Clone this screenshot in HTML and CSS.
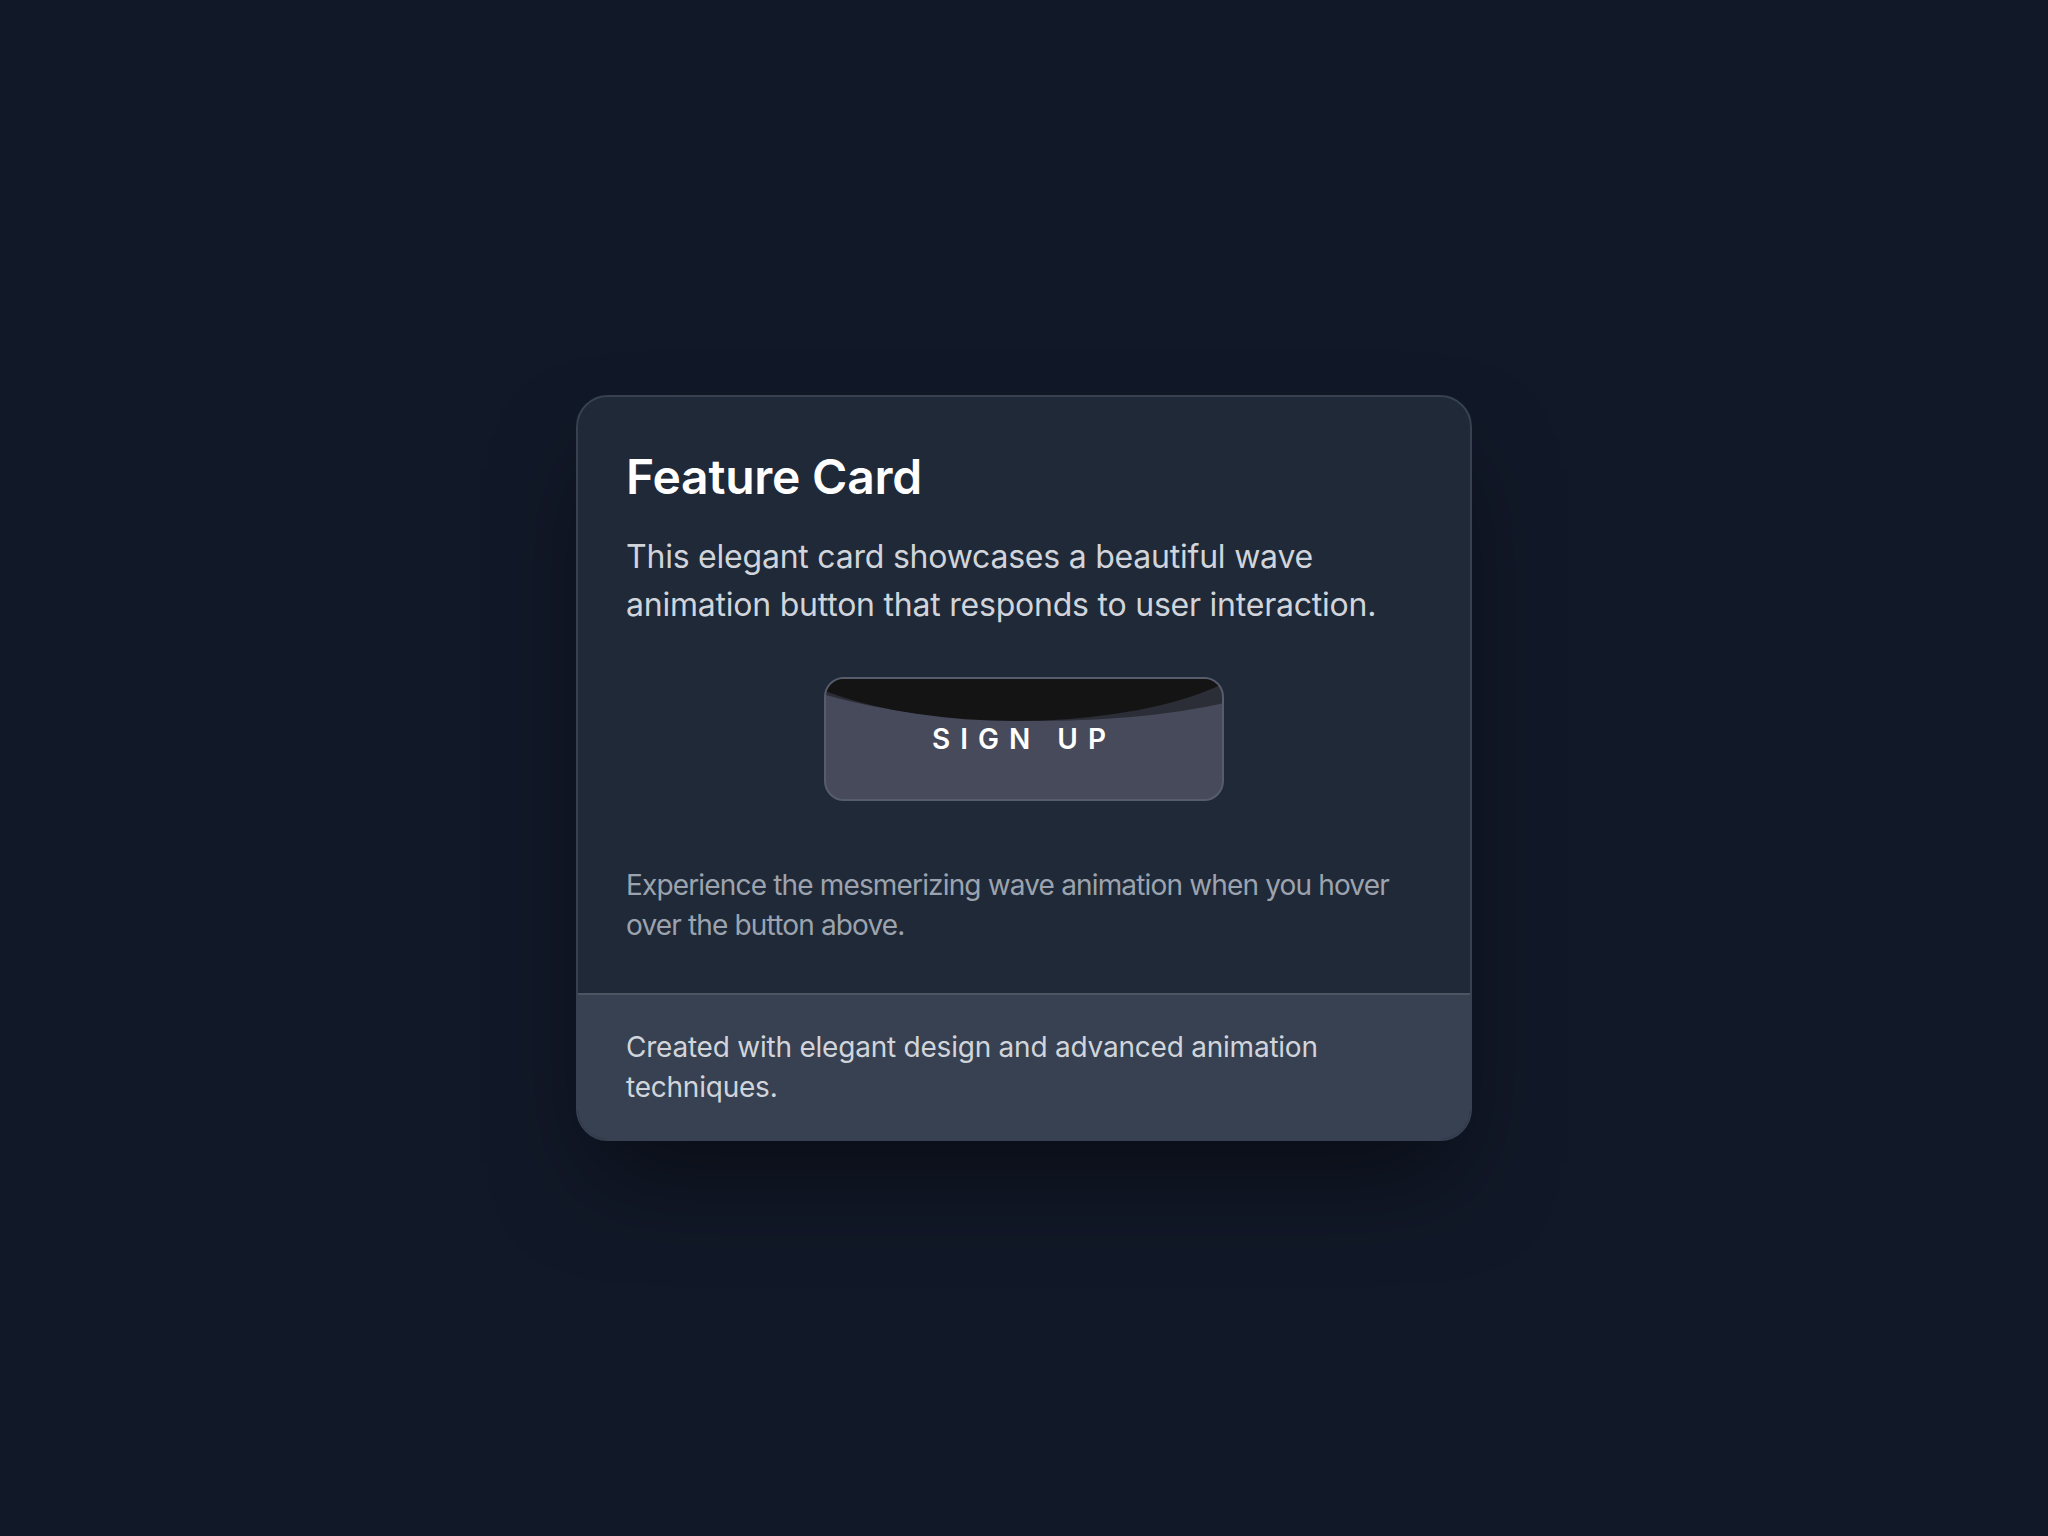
FILE: index.html
```html
<!DOCTYPE html>
<html lang="en">
<head>
    <meta charset="UTF-8">
    <meta name="viewport" content="width=device-width, initial-scale=1.0">
    <title>Feature Card</title>
    <link rel="stylesheet" href="styles.css">
</head>
<body>

<div class="card">
    <div class="card-body">
        <h2 class="card-title">Feature Card</h2>
        <p class="card-text">This elegant card showcases a beautiful wave animation button that responds to user interaction.</p>

        <div class="button-row">
            <button class="wave-button"><span>Sign up</span></button>
        </div>

        <p class="card-note">Experience the mesmerizing wave animation when you hover over the button above.</p>
    </div>

    <!-- Footer -->
    <div class="card-footer">
        Created with elegant design and advanced animation techniques.
    </div>
</div>

</body>
</html>
```

FILE: styles.css
```css
body {
    font-family: Inter, "Noto Sans", sans-serif;
    letter-spacing: -0.014em;
    background-color: #111827;
    margin: 0;
    padding: 0;
    min-height: 100vh;
    display: flex;
    align-items: center;
    justify-content: center;
}
.card {
    width: 896px;
    box-sizing: border-box;
    background: #1f2937;
    border: 2px solid #374151;
    border-radius: 32px;
    overflow: hidden;
    box-shadow: 0 50px 100px -24px rgba(0, 0, 0, 0.5);
}
.card-body {
    padding: 48px;
}
.card-title {
    margin: 0 0 24px;
    font-size: 48px;
    line-height: 64px;
    font-weight: 600;
    color: #ffffff;
}
.card-text {
    margin: 0 0 48px;
    font-size: 32px;
    line-height: 48px;
    color: #d1d5db;
}
.button-row {
    display: flex;
    justify-content: center;
}
.wave-button {
    position: relative;
    overflow: hidden;
    width: 400px;
    height: 124px;
    padding: 0;
    background: #474a5a;
    border: 2px solid #575c6c;
    border-radius: 20px;
    color: #ffffff;
    font-family: Inter, "Liberation Sans", sans-serif;
    font-size: 28px;
    font-weight: 600;
    letter-spacing: 10px;
    text-transform: uppercase;
    cursor: pointer;
}
.wave-button::before, .wave-button::after {
    content: "";
    position: absolute;
    border-radius: 50%;
}
.wave-button::before {
    width: 600px;
    height: 172px;
    left: -85px;
    top: -130px;
    background: #2c2e37;
}
.wave-button::after {
    width: 520px;
    height: 188px;
    left: -70px;
    top: -146px;
    background: #141414;
}
.wave-button span {
    position: relative;
    z-index: 1;
}
.card-note {
    margin: 64px 0 0;
    font-size: 28px;
    line-height: 40px;
    letter-spacing: -0.03em;
    color: #9ca3af;
}
.card-footer {
    background: #374151;
    border-top: 2px solid #4b5563;
    padding: 32px 48px;
    font-size: 28px;
    line-height: 40px;
    color: #d1d5db;
}
```
